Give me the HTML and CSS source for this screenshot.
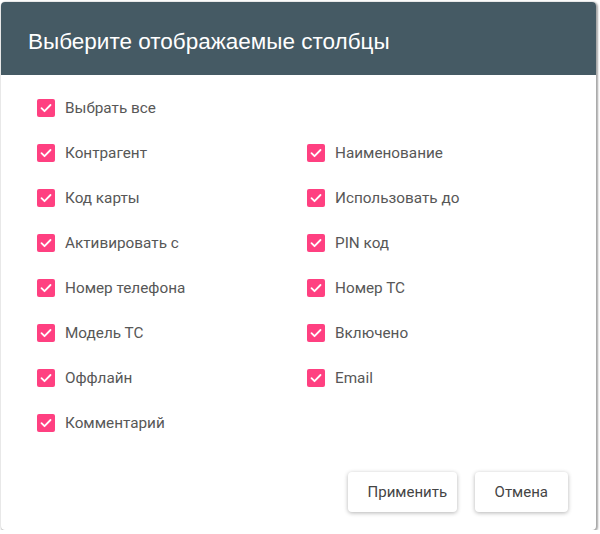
FILE: index.html
```html
<!DOCTYPE html>
<html lang="ru">
<head>
<meta charset="utf-8">
<title>Выберите отображаемые столбцы</title>
<link rel="stylesheet" href="styles.css">
</head>
<body>
<div class="dialog">
  <div class="header">Выберите отображаемые столбцы</div>
  <div class="content">
    <label class="item"><span class="box"><svg viewBox="0 0 18 18"><path d="M4.5 9.2l3 3 6-6.2"/></svg></span>Выбрать все</label>
    <div class="grid">
      <label class="item"><span class="box"><svg viewBox="0 0 18 18"><path d="M4.5 9.2l3 3 6-6.2"/></svg></span>Контрагент</label>
      <label class="item"><span class="box"><svg viewBox="0 0 18 18"><path d="M4.5 9.2l3 3 6-6.2"/></svg></span>Наименование</label>
      <label class="item"><span class="box"><svg viewBox="0 0 18 18"><path d="M4.5 9.2l3 3 6-6.2"/></svg></span>Код карты</label>
      <label class="item"><span class="box"><svg viewBox="0 0 18 18"><path d="M4.5 9.2l3 3 6-6.2"/></svg></span>Использовать до</label>
      <label class="item"><span class="box"><svg viewBox="0 0 18 18"><path d="M4.5 9.2l3 3 6-6.2"/></svg></span>Активировать с</label>
      <label class="item"><span class="box"><svg viewBox="0 0 18 18"><path d="M4.5 9.2l3 3 6-6.2"/></svg></span>PIN код</label>
      <label class="item"><span class="box"><svg viewBox="0 0 18 18"><path d="M4.5 9.2l3 3 6-6.2"/></svg></span>Номер телефона</label>
      <label class="item"><span class="box"><svg viewBox="0 0 18 18"><path d="M4.5 9.2l3 3 6-6.2"/></svg></span>Номер ТС</label>
      <label class="item"><span class="box"><svg viewBox="0 0 18 18"><path d="M4.5 9.2l3 3 6-6.2"/></svg></span>Модель ТС</label>
      <label class="item"><span class="box"><svg viewBox="0 0 18 18"><path d="M4.5 9.2l3 3 6-6.2"/></svg></span>Включено</label>
      <label class="item"><span class="box"><svg viewBox="0 0 18 18"><path d="M4.5 9.2l3 3 6-6.2"/></svg></span>Оффлайн</label>
      <label class="item"><span class="box"><svg viewBox="0 0 18 18"><path d="M4.5 9.2l3 3 6-6.2"/></svg></span>Email</label>
      <label class="item"><span class="box"><svg viewBox="0 0 18 18"><path d="M4.5 9.2l3 3 6-6.2"/></svg></span>Комментарий</label>
    </div>
  </div>
  <div class="actions">
    <button class="btn btn-apply">Применить</button>
    <button class="btn">Отмена</button>
  </div>
</div>
</body>
</html>
```
FILE: styles.css
```css
html, body {
  margin: 0;
  padding: 0;
  background: #ffffff;
}
body {
  font-family: Roboto, "Liberation Sans", Arial, sans-serif;
}
.dialog {
  margin: 2px 0 0 1px;
  width: 595px;
  height: 528px;
  box-sizing: border-box;
  background: #fff;
  border-radius: 4px;
  box-shadow: 1px 1px 2px 1px rgba(0,0,0,0.35);
  display: flex;
  flex-direction: column;
  overflow: hidden;
}
.header {
  background: #455a64;
  color: #ffffff;
  font-family: "Liberation Sans", Arial, sans-serif;
  font-size: 22.5px;
  height: 73px;
  box-sizing: border-box;
  padding: 26px 0 0 27px;
  line-height: 27px;
  flex: none;
}
.content {
  padding: 10px 0 0 36px;
  flex: 1;
}
.grid {
  display: grid;
  grid-template-columns: 270px 200px;
}
.item {
  display: flex;
  align-items: center;
  height: 45px;
  font-size: 15.3px;
  color: #575757;
}
.box {
  width: 18px;
  height: 18px;
  background: #ff4081;
  border-radius: 2px;
  margin-right: 10px;
  flex: none;
  display: flex;
}
.box svg {
  width: 18px;
  height: 18px;
  fill: none;
  stroke: #ffffff;
  stroke-width: 1.8;
  stroke-linecap: round;
  stroke-linejoin: round;
}
.actions {
  display: flex;
  justify-content: flex-end;
  gap: 18px;
  padding: 0 28px 18px 0;
}
.btn {
  font-family: Roboto, "Liberation Sans", Arial, sans-serif;
  font-size: 15px;
  color: #444444;
  background: #fff;
  border: none;
  border-radius: 4px;
  height: 40px;
  padding: 0 20px;
  box-shadow: 0 1px 4px rgba(0,0,0,0.3);
}
.btn-apply {
  width: 109px;
}
```
